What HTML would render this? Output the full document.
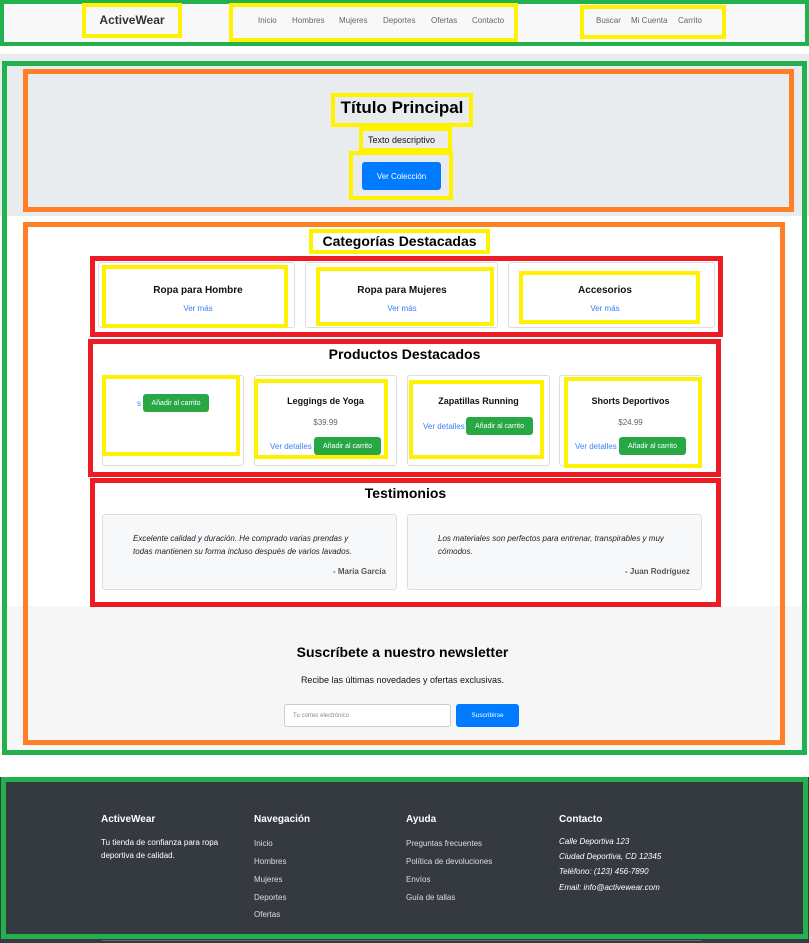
<!DOCTYPE html>
<html><head><meta charset="utf-8"><style>
*{margin:0;padding:0;box-sizing:border-box}
body{width:809px;height:943px;position:relative;background:#fff;font-family:"Liberation Sans",Arial,sans-serif;overflow:hidden;color:#111}
.a{position:absolute}
.b{position:absolute;border-style:solid}
.g{border-color:#22b14c;border-width:5px}
.o{border-color:#ff7f27;border-width:5px}
.r{border-color:#ed1c24;border-width:5px}
.y{border-color:#fff200;border-width:4px}
.c{text-align:center;white-space:nowrap}
.card{position:absolute;border:1px solid #ddd;border-radius:3px;background:#fff}
.btn{position:absolute;background:#28a745;color:#fff;font-size:7px;border-radius:3px;display:flex;align-items:center;justify-content:center}
.lnk{color:#3b82f6}
.f{position:absolute;color:#ddd;font-size:8px}
.fh{position:absolute;color:#fff;font-size:10px;font-weight:bold}
</style></head><body>
<div class="a" style="left:0;top:0;width:809px;height:46px;background:#f8f8f8"></div>
<div class="b g" style="left:0;top:0;width:809px;height:46px;border-width:4px"></div>
<div class="b y" style="left:82px;top:3px;width:100px;height:35px"></div>
<div class="a c" style="left:82px;top:13px;width:100px;font-size:12px;font-weight:bold;color:#333">ActiveWear</div>
<div class="b y" style="left:229px;top:3px;width:289px;height:39px"></div>
<div class="a" style="left:258px;top:16px;font-size:8px;color:#666">Inicio</div>
<div class="a" style="left:292px;top:16px;font-size:8px;color:#666">Hombres</div>
<div class="a" style="left:339px;top:16px;font-size:8px;color:#666">Mujeres</div>
<div class="a" style="left:383px;top:16px;font-size:8px;color:#666">Deportes</div>
<div class="a" style="left:431px;top:16px;font-size:8px;color:#666">Ofertas</div>
<div class="a" style="left:472px;top:16px;font-size:8px;color:#666">Contacto</div>
<div class="b y" style="left:580px;top:5px;width:146px;height:34px"></div>
<div class="a" style="left:596px;top:16px;font-size:8px;color:#666">Buscar</div>
<div class="a" style="left:631px;top:16px;font-size:8px;color:#666">Mi Cuenta</div>
<div class="a" style="left:678px;top:16px;font-size:8px;color:#666">Carrito</div>

<div class="a" style="left:0;top:54px;width:809px;height:162px;background:#e9ecef"></div>
<div class="a" style="left:0;top:606px;width:809px;height:144px;background:#f6f6f6"></div>
<div class="b g" style="left:2px;top:61px;width:805px;height:694px"></div>
<div class="b o" style="left:23px;top:69px;width:771px;height:143px"></div>
<div class="b y" style="left:331px;top:93px;width:142px;height:34px"></div>
<div class="a c" style="left:331px;top:98px;width:142px;font-size:17px;font-weight:bold;color:#000">Título Principal</div>
<div class="b y" style="left:359px;top:127px;width:93px;height:25px"></div>
<div class="a" style="left:368px;top:135px;font-size:9px;color:#111">Texto descriptivo</div>
<div class="b y" style="left:349px;top:151px;width:104px;height:49px"></div>
<div class="a" style="left:362px;top:162px;width:79px;height:28px;background:#007bff;border-radius:3px;color:#fff;font-size:8px;display:flex;align-items:center;justify-content:center">Ver Colección</div>

<div class="b o" style="left:23px;top:222px;width:762px;height:523px"></div>
<div class="b y" style="left:309px;top:229px;width:181px;height:25px"></div>
<div class="a c" style="left:309px;top:233px;width:181px;font-size:14px;font-weight:bold;color:#000">Categorías Destacadas</div>

<div class="b r" style="left:90px;top:256px;width:633px;height:81px"></div>
<div class="card" style="left:98px;top:262px;width:197px;height:66px"></div>
<div class="card" style="left:305px;top:262px;width:193px;height:66px"></div>
<div class="card" style="left:508px;top:262px;width:207px;height:66px"></div>
<div class="b y" style="left:102px;top:265px;width:186px;height:63px"></div>
<div class="b y" style="left:316px;top:267px;width:178px;height:59px"></div>
<div class="b y" style="left:519px;top:271px;width:181px;height:53px"></div>
<div class="a c" style="left:98px;top:285px;width:200px;font-size:10px;font-weight:bold">Ropa para Hombre</div>
<div class="a c lnk" style="left:98px;top:304px;width:200px;font-size:8px">Ver más</div>
<div class="a c" style="left:302px;top:285px;width:200px;font-size:10px;font-weight:bold">Ropa para Mujeres</div>
<div class="a c lnk" style="left:302px;top:304px;width:200px;font-size:8px">Ver más</div>
<div class="a c" style="left:505px;top:285px;width:200px;font-size:10px;font-weight:bold">Accesorios</div>
<div class="a c lnk" style="left:505px;top:304px;width:200px;font-size:8px">Ver más</div>

<div class="b r" style="left:88px;top:339px;width:633px;height:138px"></div>
<div class="a c" style="left:88px;top:346px;width:633px;font-size:14px;font-weight:bold;color:#000">Productos Destacados</div>
<div class="card" style="left:102px;top:375px;width:142px;height:91px"></div>
<div class="card" style="left:254px;top:375px;width:143px;height:91px"></div>
<div class="card" style="left:407px;top:375px;width:143px;height:91px"></div>
<div class="card" style="left:559px;top:375px;width:143px;height:91px"></div>
<div class="b y" style="left:102px;top:375px;width:138px;height:81px"></div>
<div class="b y" style="left:254px;top:379px;width:134px;height:80px"></div>
<div class="b y" style="left:409px;top:380px;width:135px;height:79px"></div>
<div class="b y" style="left:564px;top:377px;width:138px;height:91px"></div>
<div class="a lnk" style="left:137px;top:399px;font-size:8px">s</div>
<div class="btn" style="left:143px;top:394px;width:66px;height:18px">Añadir al carrito</div>
<div class="a c" style="left:254px;top:396px;width:143px;font-size:9px;font-weight:bold">Leggings de Yoga</div>
<div class="a c" style="left:254px;top:418px;width:143px;font-size:8px;color:#666">$39.99</div>
<div class="a lnk" style="left:270px;top:442px;font-size:8px">Ver detalles</div>
<div class="btn" style="left:314px;top:437px;width:67px;height:18px">Añadir al carrito</div>
<div class="a c" style="left:407px;top:396px;width:143px;font-size:9px;font-weight:bold">Zapatillas Running</div>
<div class="a lnk" style="left:423px;top:422px;font-size:8px">Ver detalles</div>
<div class="btn" style="left:466px;top:417px;width:67px;height:18px">Añadir al carrito</div>
<div class="a c" style="left:559px;top:396px;width:143px;font-size:9px;font-weight:bold">Shorts Deportivos</div>
<div class="a c" style="left:559px;top:418px;width:143px;font-size:8px;color:#666">$24.99</div>
<div class="a lnk" style="left:575px;top:442px;font-size:8px">Ver detalles</div>
<div class="btn" style="left:619px;top:437px;width:67px;height:18px">Añadir al carrito</div>

<div class="b r" style="left:90px;top:478px;width:631px;height:129px"></div>
<div class="a c" style="left:90px;top:485px;width:631px;font-size:14px;font-weight:bold;color:#000">Testimonios</div>
<div class="a" style="left:102px;top:514px;width:295px;height:76px;background:#f7f8fa;border:1px solid #ddd;border-radius:3px"></div>
<div class="a" style="left:407px;top:514px;width:295px;height:76px;background:#f7f8fa;border:1px solid #ddd;border-radius:3px"></div>
<div class="a" style="left:133px;top:532px;width:225px;font-size:8px;font-style:italic;line-height:13px;color:#222">Excelente calidad y duración. He comprado varias prendas y todas mantienen su forma incluso después de varios lavados.</div>
<div class="a" style="left:333px;top:567px;font-size:8px;font-weight:bold;color:#555">- María García</div>
<div class="a" style="left:438px;top:532px;width:235px;font-size:8px;font-style:italic;line-height:13px;color:#222">Los materiales son perfectos para entrenar, transpirables y muy cómodos.</div>
<div class="a" style="left:625px;top:567px;font-size:8px;font-weight:bold;color:#555">- Juan Rodríguez</div>

<div class="a c" style="left:0;top:644px;width:805px;font-size:14px;font-weight:bold;color:#000">Suscríbete a nuestro newsletter</div>
<div class="a c" style="left:0;top:675px;width:805px;font-size:9px;color:#111">Recibe las últimas novedades y ofertas exclusivas.</div>
<div class="a" style="left:284px;top:704px;width:167px;height:23px;background:#fff;border:1px solid #ccc;border-radius:3px;font-size:6px;color:#888;padding:8px 0 0 8px">Tu correo electrónico</div>
<div class="a" style="left:456px;top:704px;width:63px;height:23px;background:#007bff;border-radius:3px;color:#fff;font-size:6.5px;display:flex;align-items:center;justify-content:center">Suscribirse</div>

<div class="a" style="left:0;top:777px;width:809px;height:166px;background:#343a40"></div>
<div class="b g" style="left:1px;top:777px;width:807px;height:162px"></div>
<div class="fh" style="left:101px;top:814px">ActiveWear</div>
<div class="f" style="left:101px;top:836px;line-height:13px;width:130px;color:#fff">Tu tienda de confianza para ropa deportiva de calidad.</div>
<div class="fh" style="left:254px;top:814px">Navegación</div>
<div class="f" style="left:254px;top:839px">Inicio</div>
<div class="f" style="left:254px;top:857px">Hombres</div>
<div class="f" style="left:254px;top:875px">Mujeres</div>
<div class="f" style="left:254px;top:893px">Deportes</div>
<div class="f" style="left:254px;top:910px">Ofertas</div>
<div class="fh" style="left:406px;top:814px">Ayuda</div>
<div class="f" style="left:406px;top:839px">Preguntas frecuentes</div>
<div class="f" style="left:406px;top:857px">Política de devoluciones</div>
<div class="f" style="left:406px;top:875px">Envíos</div>
<div class="f" style="left:406px;top:893px">Guía de tallas</div>
<div class="fh" style="left:559px;top:814px">Contacto</div>
<div class="f" style="left:559px;top:837px;font-style:italic;color:#fff">Calle Deportiva 123</div>
<div class="f" style="left:559px;top:852px;font-style:italic;color:#fff">Ciudad Deportiva, CD 12345</div>
<div class="f" style="left:559px;top:867px;font-style:italic;color:#fff">Teléfono: (123) 456-7890</div>
<div class="f" style="left:559px;top:883px;font-style:italic;color:#fff">Email: info@activewear.com</div>
<div class="a" style="left:102px;top:940px;width:600px;height:1px;background:#666"></div>
</body></html>
